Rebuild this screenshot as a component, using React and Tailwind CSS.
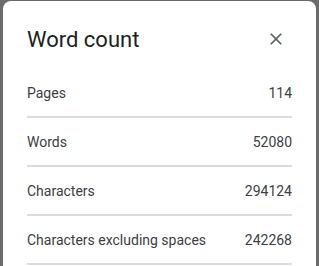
import React from 'react';

const rows = [
  { label: 'Pages', value: '114' },
  { label: 'Words', value: '52080' },
  { label: 'Characters', value: '294124' },
  { label: 'Characters excluding spaces', value: '242268' },
];

export default function App() {
  return (
    <div className="h-[266px] w-[319px] overflow-hidden bg-[#6b6b6b] pt-px pl-[3px] font-['Roboto',sans-serif]">
      <div className="w-[313px] h-[300px] rounded-lg bg-white">
        <div className="flex items-center justify-between pt-[25px] pb-[15px] pl-6 pr-[30px]">
          <h1 className="text-[22px] leading-[28px] text-[#202124]">Word count</h1>
          <svg width="20" height="20" viewBox="0 0 24 24" className="-mt-[3px]">
            <path
              d="M19 6.41 17.59 5 12 10.59 6.41 5 5 6.41 10.59 12 5 17.59 6.41 19 12 13.41 17.59 19 19 17.59 13.41 12z"
              fill="#5f6368"
            />
          </svg>
        </div>
        <div className="px-6">
          {rows.map((r) => (
            <div
              key={r.label}
              className="flex h-[49px] items-center justify-between border-b-2 border-[#dadce0] pt-[2px] text-[14px] text-[#3c4043]"
            >
              <span>{r.label}</span>
              <span>{r.value}</span>
            </div>
          ))}
        </div>
      </div>
    </div>
  );
}
